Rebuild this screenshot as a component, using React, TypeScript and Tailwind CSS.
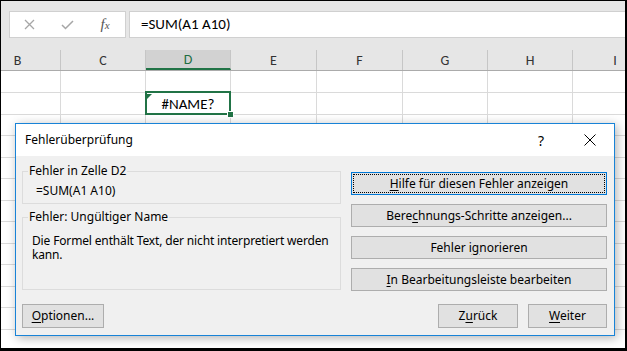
import React from 'react';

// Spalten der Tabelle (Breite inkl. rechter Gitterlinie)
const cols = [
  { l: 'B', w: 'w-[86px]' },
  { l: 'C', w: 'w-[85px]' },
  { l: 'D', w: 'w-[85px]' },
  { l: 'E', w: 'w-[86px]' },
  { l: 'F', w: 'w-[86px]' },
  { l: 'G', w: 'w-[85px]' },
  { l: 'H', w: 'w-[85px]' },
  { l: 'I', w: 'w-[85px]' },
];

const rowHeights = [
  'h-[22px]', 'h-[22px]', 'h-[21px]', 'h-[22px]', 'h-[21px]', 'h-[22px]',
  'h-[21px]', 'h-[22px]', 'h-[21px]', 'h-[22px]', 'h-[21px]', 'h-[22px]',
];

const sheetFont = { fontFamily: '"Carlito", "Lato", "Open Sans", sans-serif' };
const uiFont = { fontFamily: '"Segoe UI", "Noto Sans", "Open Sans", sans-serif' };

function Key({ children }: { children: React.ReactNode }) {
  return <span className="underline underline-offset-[2px]">{children}</span>;
}

function Btn({
  children,
  className = '',
  primary = false,
}: {
  children: React.ReactNode;
  className?: string;
  primary?: boolean;
}) {
  return (
    <div
      className={`relative flex items-center justify-center border bg-[#e1e1e1] text-[12px] text-black ${
        primary ? 'border-[#0078d7]' : 'border-[#adadad]'
      } ${className}`}
    >
      {primary && <div className="absolute inset-[1px] border border-dotted border-black" />}
      <span className="leading-none">{children}</span>
    </div>
  );
}

function Group({ title, className = '', children }: { title: string; className?: string; children: React.ReactNode }) {
  return (
    <fieldset className={`border border-[#dcdcdc] ${className}`}>
      <legend className="ml-[5px] px-[1px] text-[12px] leading-[16px] text-black">{title}</legend>
      {children}
    </fieldset>
  );
}

export default function App() {
  return (
    <div className="relative h-[351px] w-[627px] overflow-hidden border-t border-l border-r-2 border-b-[3px] border-black bg-white">
      {/* Bearbeitungsleiste */}
      <div className="flex h-[49px] bg-[#e6e6e6] pt-[10px] pl-[8px]" style={sheetFont}>
        <div className="flex h-[27px] w-[117px] items-center border border-[#d0d0d0] bg-white">
          <span className="flex w-[38px] justify-center">
            <svg width="11" height="11" viewBox="0 0 11 11">
              <path d="M1 1 L10 10 M10 1 L1 10" stroke="#a6a6a6" strokeWidth="1.3" />
            </svg>
          </span>
          <span className="flex w-[38px] justify-center">
            <svg width="13" height="10" viewBox="0 0 13 10">
              <path d="M1 5 L4.5 8.5 L12 1" stroke="#a6a6a6" strokeWidth="1.5" fill="none" />
            </svg>
          </span>
          <span
            className="flex w-[38px] justify-center text-[15px] italic text-[#555]"
            style={{ fontFamily: '"Liberation Serif", serif' }}
          >
            f<span className="mt-[4px] text-[11px]">x</span>
          </span>
        </div>
        <div className="ml-[3px] flex h-[27px] flex-1 items-center border border-r-0 border-[#d0d0d0] bg-white pl-[11px] text-[15px] text-black">
          =SUM(A1 A10)
        </div>
      </div>

      {/* Tabelle */}
      <div className="ml-[-26px] flex flex-col" style={sheetFont}>
        <div className="flex h-[21px] border-b border-[#ababab] bg-[#e6e6e6]">
          {cols.map((c) => (
            <div
              key={c.l}
              className={`${c.w} flex shrink-0 items-center justify-center border-r border-[#c6c6c6] text-[14px] ${
                c.l === 'D' ? 'border-b-2 border-b-[#217346] bg-[#d2d2d2] text-[#1e6e42]' : 'text-[#333]'
              }`}
            >
              {c.l}
            </div>
          ))}
        </div>
        {rowHeights.map((h, r) => (
          <div key={r} className={`flex ${h}`}>
            {cols.map((c) => (
              <div
                key={c.l}
                className={`${c.w} relative flex shrink-0 items-center justify-center border-r border-b border-[#dadada] ${
                  r === 1 && c.l === 'D' ? 'z-10' : ''
                }`}
              >
                {r === 1 && c.l === 'D' && (
                  <>
                    <span className="pt-[2px] text-[15px] text-black">#NAME?</span>
                    <div className="absolute -top-[2px] -left-[1px] -right-[1px] -bottom-[1px] border-2 border-[#217346]" />
                    <svg className="absolute top-[1px] left-[1px]" width="5" height="5" viewBox="0 0 5 5">
                      <path d="M0 0 L5 0 L0 5 Z" fill="#217346" />
                    </svg>
                    <div className="absolute -right-[4px] -bottom-[4px] h-[7px] w-[7px] border border-white bg-[#217346]" />
                  </>
                )}
              </div>
            ))}
          </div>
        ))}
      </div>

      {/* Dialog Fehlerüberprüfung */}
      <div
        className="absolute top-[122px] left-[14px] z-20 flex h-[213px] w-[600px] flex-col border border-[#1883d7] bg-[#f0f0f0] shadow-[2px_2px_10px_rgba(0,0,0,0.3)]"
        style={uiFont}
      >
        <div className="flex h-[32px] shrink-0 items-center bg-white pl-[9px] text-[12px] text-black">
          <span>Fehlerüberprüfung</span>
          <span className="ml-auto flex w-[50px] justify-center text-[14px]">?</span>
          <span className="flex w-[48px] justify-center">
            <svg width="12" height="12" viewBox="0 0 12 12">
              <path d="M0.5 0.5 L11.5 11.5 M11.5 0.5 L0.5 11.5" stroke="#000" strokeWidth="1" />
            </svg>
          </span>
        </div>

        <div className="flex flex-1 flex-col pt-[7px] pr-[7px] pl-[6px]">
          <div className="flex gap-[10px]">
            <div className="flex w-[319px] flex-col">
              <Group title="Fehler in Zelle D2" className="h-[41px]">
                <div className="pt-[5px] pl-[13px] text-[12px] leading-[14px] text-black">=SUM(A1 A10)</div>
              </Group>
              <Group title="Fehler: Ungültiger Name" className="mt-[5px] h-[81px]">
                <div className="pt-[9px] pl-[9px] text-[12px] leading-[14px] tracking-[-0.15px] text-black">
                  Die Formel enthält Text, der nicht interpretiert werden kann.
                </div>
              </Group>
            </div>
            <div className="mt-[9px] flex w-[256px] flex-col gap-[9px]">
              <Btn primary className="h-[23px]">
                <Key>H</Key>ilfe für diesen Fehler anzeigen
              </Btn>
              <Btn className="h-[23px]">
                Bere<Key>c</Key>hnungs-Schritte anzeigen...
              </Btn>
              <Btn className="h-[23px]">
                Fehler i<Key>g</Key>norieren
              </Btn>
              <Btn className="h-[23px]">
                <Key>I</Key>n Bearbeitungsleiste bearbeiten
              </Btn>
            </div>
          </div>

          <div className="mt-[13px] flex">
            <Btn className="h-[24px] w-[82px]">
              <Key>O</Key>ptionen...
            </Btn>
            <Btn className="ml-auto h-[24px] w-[80px]">
              Z<Key>u</Key>rück
            </Btn>
            <Btn className="ml-[10px] h-[24px] w-[79px]">
              <Key>W</Key>eiter
            </Btn>
          </div>
        </div>
      </div>
    </div>
  );
}
